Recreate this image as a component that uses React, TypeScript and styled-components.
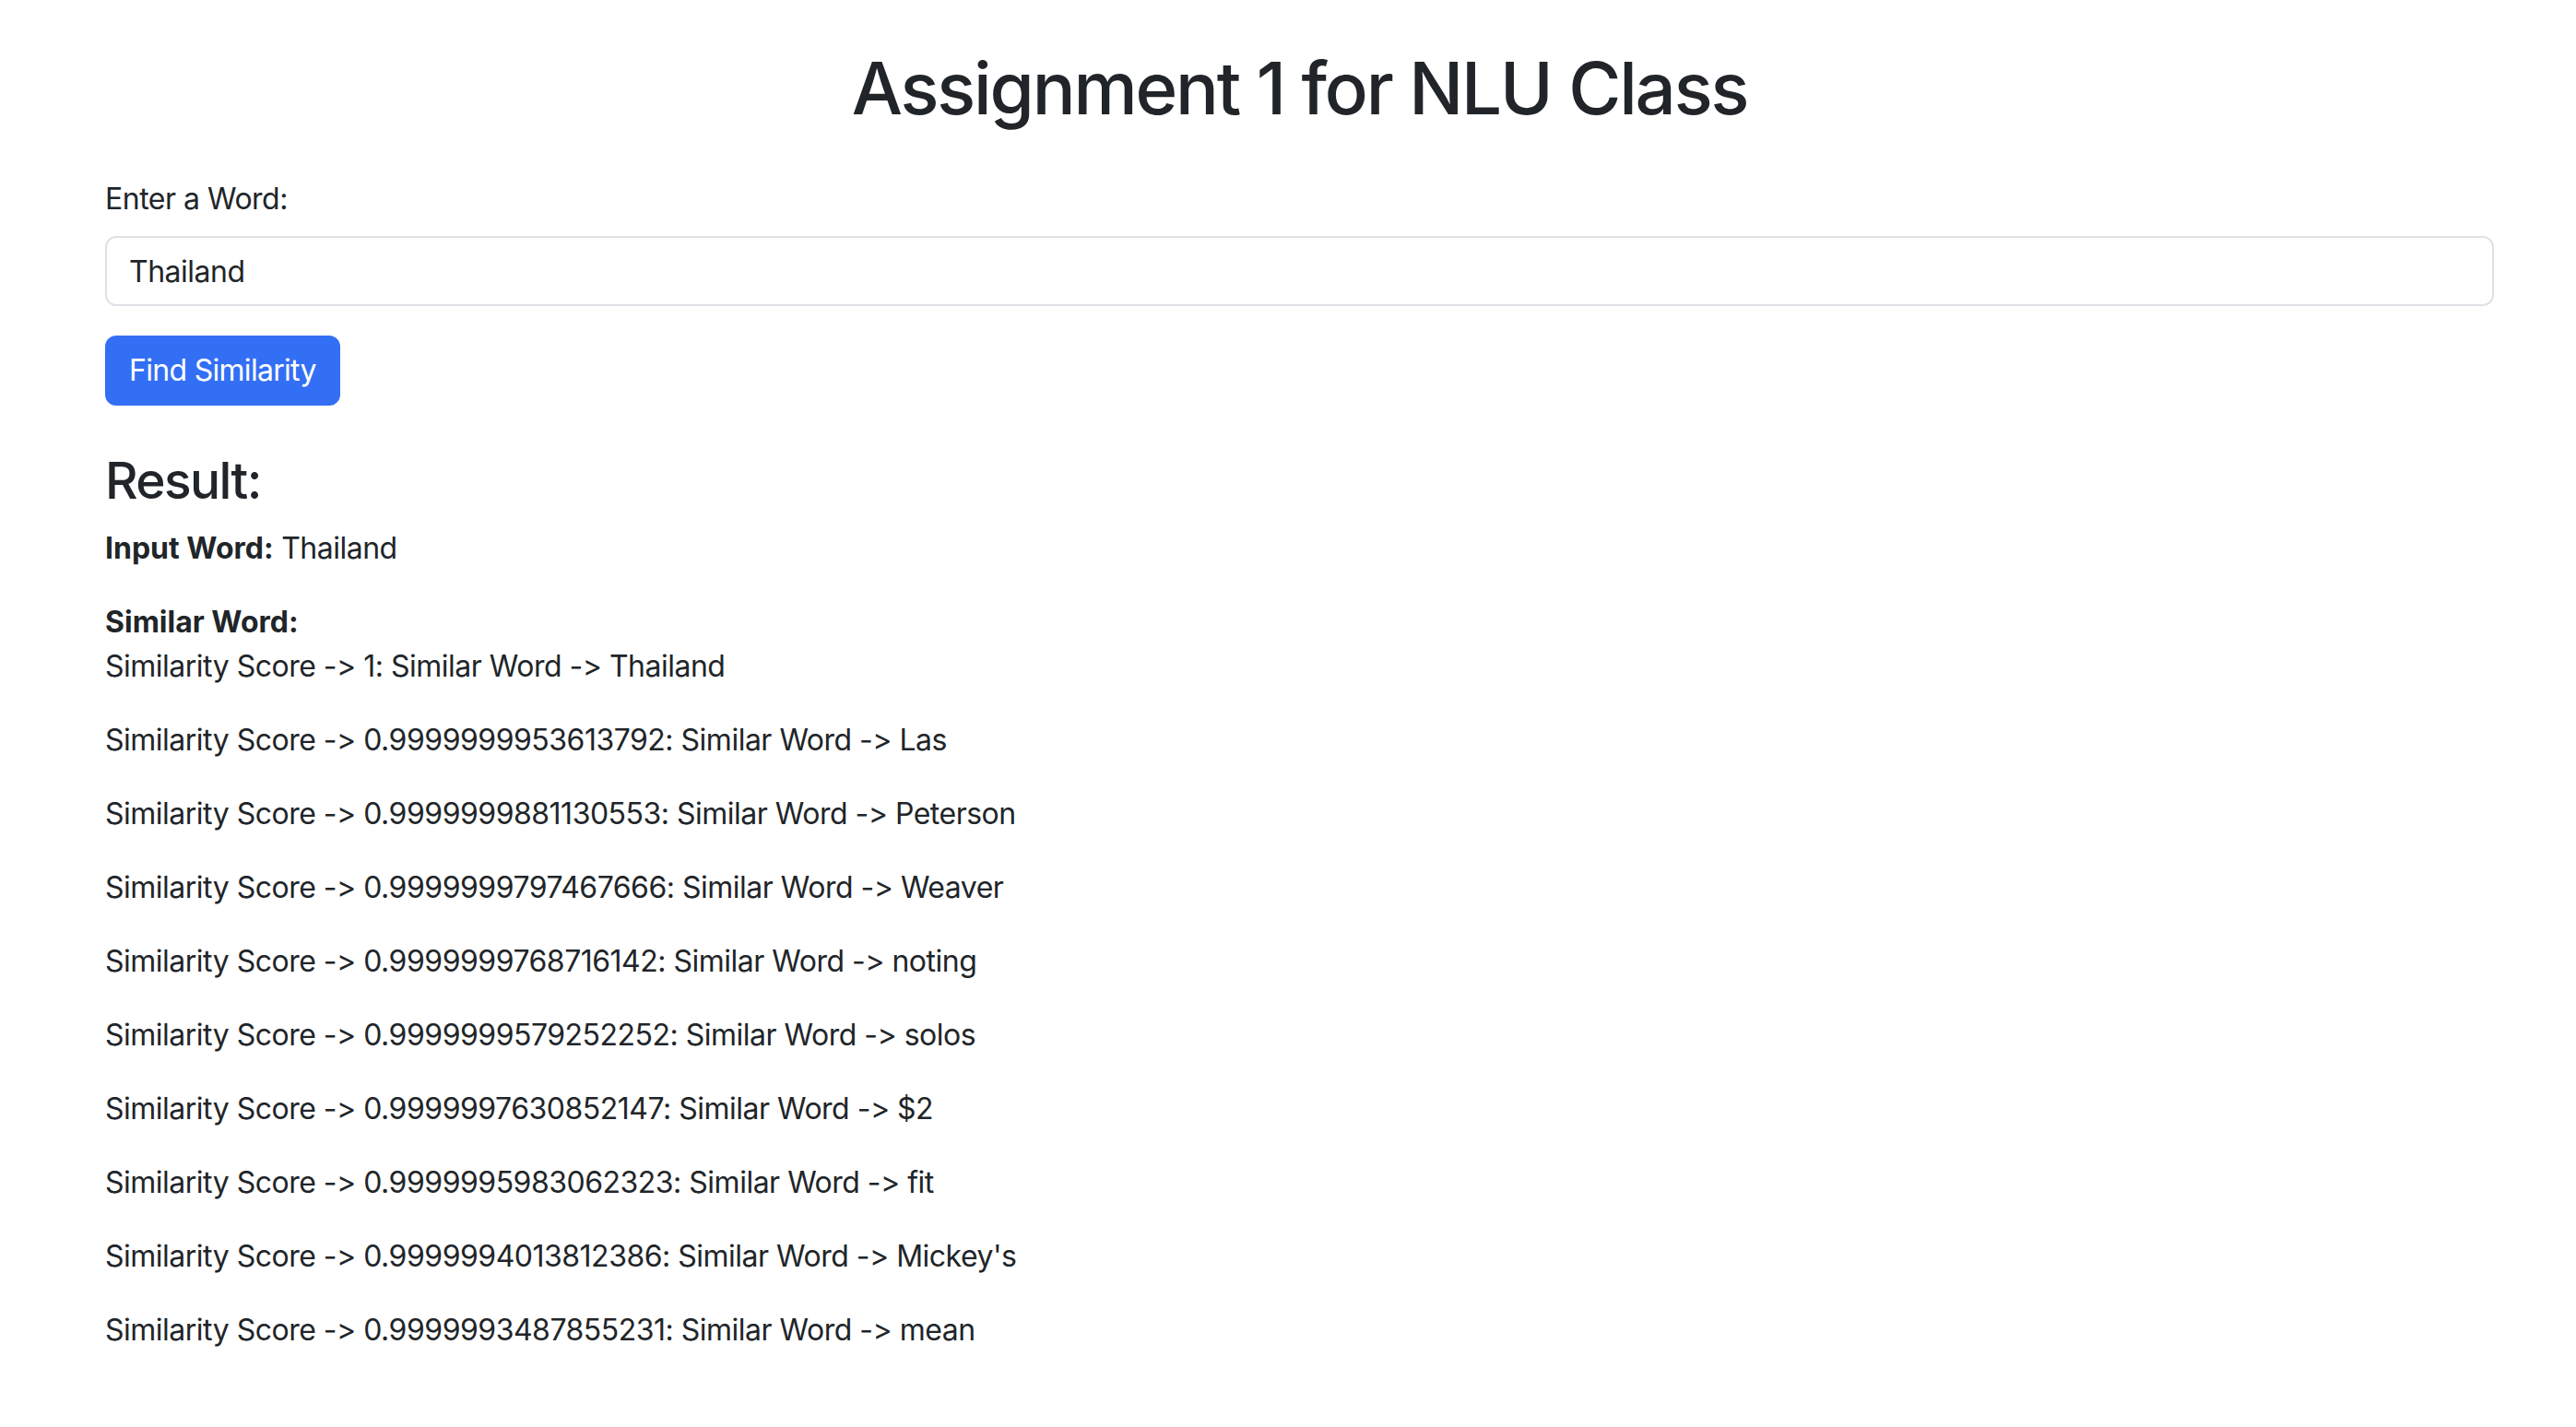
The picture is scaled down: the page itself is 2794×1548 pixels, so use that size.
import React from "react";
import styled, { createGlobalStyle } from "styled-components";

const GlobalStyle = createGlobalStyle`
  * { box-sizing: border-box; }
  html, body { margin: 0; padding: 0; background: #ffffff; }
  body {
    font-family: Inter, "Noto Sans", "Liberation Sans", sans-serif;
    font-size: 32px;
    line-height: 1.5;
    color: #212529;
    font-feature-settings: "calt" 0, "liga" 0;
    letter-spacing: -0.5px;
  }
`;

const Container = styled.main`
  width: 2591px;
  margin-left: 114px;
  padding-top: 48px;
  padding-bottom: 64px;
  display: flex;
  flex-direction: column;
`;

const Title = styled.h1`
  margin: 0 0 48px;
  font-size: 78px;
  font-weight: 500;
  line-height: 96px;
  text-align: center;
  letter-spacing: -2.2px;
`;

const Form = styled.form`
  display: flex;
  flex-direction: column;
  align-items: flex-start;
`;

const Label = styled.label`
  display: block;
  margin-bottom: 16px;
  font-size: 32px;
  line-height: 48px;
`;

const Input = styled.input`
  display: block;
  width: 100%;
  height: 76px;
  margin-bottom: 32px;
  padding: 12px 24px;
  font-family: inherit;
  font-size: 32px;
  line-height: 48px;
  letter-spacing: -0.5px;
  font-feature-settings: "calt" 0;
  color: #212529;
  background: #ffffff;
  border: 2px solid #dee2e6;
  border-radius: 12px;
  outline: none;
`;

const Button = styled.button`
  height: 76px;
  padding: 12px 24px;
  font-family: inherit;
  font-size: 32px;
  line-height: 48px;
  letter-spacing: -0.7px;
  color: #ffffff;
  background: #336ff4;
  border: 2px solid #336ff4;
  border-radius: 12px;
  cursor: pointer;
`;

const ResultSection = styled.section`
  margin-top: 48px;
  display: flex;
  flex-direction: column;
`;

const ResultHeading = styled.h3`
  margin: 0 0 16px;
  font-size: 55px;
  font-weight: 500;
  line-height: 67px;
  letter-spacing: -1.6px;
`;

const Para = styled.p`
  margin: 0 0 32px;
  line-height: 48px;
`;

const Strong = styled.strong`
  font-weight: 700;
  letter-spacing: 0;
`;

const BlockStrong = styled.strong`
  display: block;
  font-weight: 700;
  line-height: 48px;
  letter-spacing: 0;
`;

const results: [string, string][] = [
  ["1", "Thailand"],
  ["0.9999999953613792", "Las"],
  ["0.9999999881130553", "Peterson"],
  ["0.9999999797467666", "Weaver"],
  ["0.9999999768716142", "noting"],
  ["0.9999999579252252", "solos"],
  ["0.9999997630852147", "$2"],
  ["0.9999995983062323", "fit"],
  ["0.9999994013812386", "Mickey's"],
  ["0.9999993487855231", "mean"],
];

export default function App() {
  return (
    <>
      <GlobalStyle />
      <Container>
        <Title>Assignment 1 for NLU Class</Title>
        <Form onSubmit={(e) => e.preventDefault()}>
          <Label htmlFor="word">Enter a Word:</Label>
          <Input id="word" type="text" defaultValue="Thailand" />
          <Button type="submit">Find Similarity</Button>
        </Form>
        <ResultSection>
          <ResultHeading>Result:</ResultHeading>
          <Para>
            <Strong>Input Word:</Strong> Thailand
          </Para>
          <BlockStrong>Similar Word:</BlockStrong>
          {results.map(([score, word]) => (
            <Para key={score + word}>
              Similarity Score -&gt; {score}: Similar Word -&gt; {word}
            </Para>
          ))}
        </ResultSection>
      </Container>
    </>
  );
}
